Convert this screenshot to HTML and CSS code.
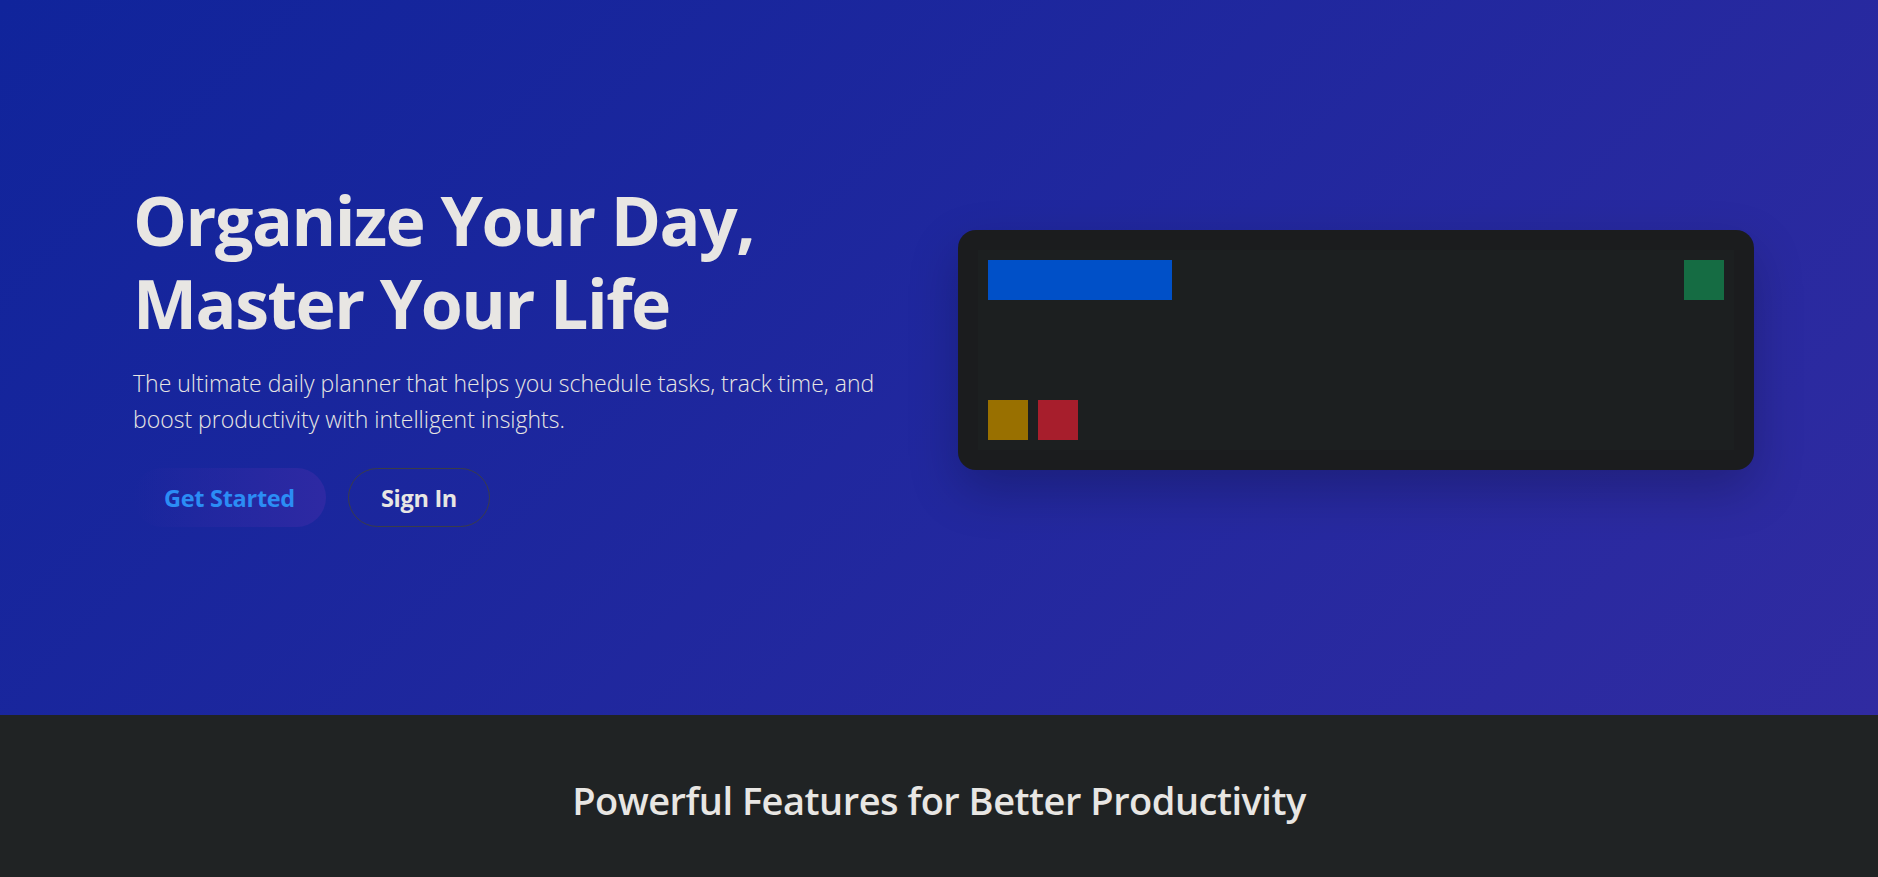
FILE: index.html
```html
<!DOCTYPE html>
<html lang="en">
<head>
<meta charset="utf-8">
<title>Daily Planner</title>
<link rel="stylesheet" href="styles.css">
</head>
<body>
<section class="hero">
  <div class="hero-inner">
    <div class="hero-text">
      <h1 class="hero-title">Organize Your Day,<br>Master Your Life</h1>
      <p class="hero-sub">The ultimate daily planner that helps you schedule tasks, track time, and boost productivity with intelligent insights.</p>
      <div class="hero-actions">
        <a class="btn btn-primary" href="#">Get Started</a>
        <a class="btn btn-outline" href="#">Sign In</a>
      </div>
    </div>
    <div class="preview">
      <div class="preview-panel">
        <div class="preview-row">
          <div class="block block-blue"></div>
          <div class="block block-green"></div>
        </div>
        <div class="preview-row preview-row-left">
          <div class="block block-yellow"></div>
          <div class="block block-red"></div>
        </div>
      </div>
    </div>
  </div>
</section>
<section class="features">
  <h2 class="features-title">Powerful Features for Better Productivity</h2>
</section>
</body>
</html>
```
FILE: styles.css
```css
* {
  box-sizing: border-box;
}

html, body {
  margin: 0;
  padding: 0;
}

body {
  font-family: "Open Sans", "Noto Sans", sans-serif;
  color: #e8e6e3;
  background: #202324;
}

.hero {
  height: 715px;
  display: flex;
  align-items: center;
  background: linear-gradient(135deg, #10249b 0%, #302ba1 100%);
  padding-bottom: 10px;
}

.hero-inner {
  width: 100%;
  display: grid;
  grid-template-columns: 1fr 796px;
  column-gap: 60px;
  align-items: center;
  padding: 0 124px 0 133px;
}

.hero-title {
  margin: 0;
  font-size: 68px;
  line-height: 83px;
  font-weight: 700;
  letter-spacing: -1.5px;
  color: #e8e6e3;
}

.hero-sub {
  margin: 21px 0 0;
  font-size: 23px;
  line-height: 36px;
  font-weight: 300;
  max-width: 760px;
}

.hero-actions {
  display: flex;
  gap: 22px;
  margin-top: 31px;
}

.btn {
  display: inline-flex;
  align-items: center;
  justify-content: center;
  height: 59px;
  padding: 0 20px;
  border-radius: 30px;
  font-size: 23.5px;
  font-weight: 700;
  text-decoration: none;
  letter-spacing: -0.3px;
  white-space: nowrap;
}

.btn-primary {
  width: 193px;
  color: #2b8df5;
  background: linear-gradient(90deg, rgba(24, 38, 158, 0) 0%, #2e29a3 100%);
}

.btn-outline {
  width: 142px;
  color: #e8e6e3;
  border: 1px solid #3b3d48;
}

.preview {
  height: 240px;
  padding: 20px;
  margin-bottom: 5px;
  border-radius: 18px;
  background: #1b1c1e;
  box-shadow: 0 20px 50px rgba(0, 0, 0, 0.22);
}

.preview-panel {
  height: 100%;
  padding: 10px;
  background: #1c1f20;
  display: flex;
  flex-direction: column;
  justify-content: space-between;
}

.preview-row {
  display: flex;
  justify-content: space-between;
}

.preview-row-left {
  justify-content: flex-start;
  gap: 10px;
}

.block {
  height: 40px;
  width: 40px;
}

.block-blue {
  width: 25%;
  background: #0050c8;
}

.block-green {
  background: #156c43;
}

.block-yellow {
  background: #997000;
}

.block-red {
  background: #a71e2c;
}

.features {
  padding: 61px 20px 60px;
  min-height: 300px;
  background: #202324;
}

.features-title {
  margin: 0;
  text-align: center;
  font-size: 38px;
  line-height: 48px;
  font-weight: 600;
  color: #e8e6e3;
  letter-spacing: -0.5px;
}
```
